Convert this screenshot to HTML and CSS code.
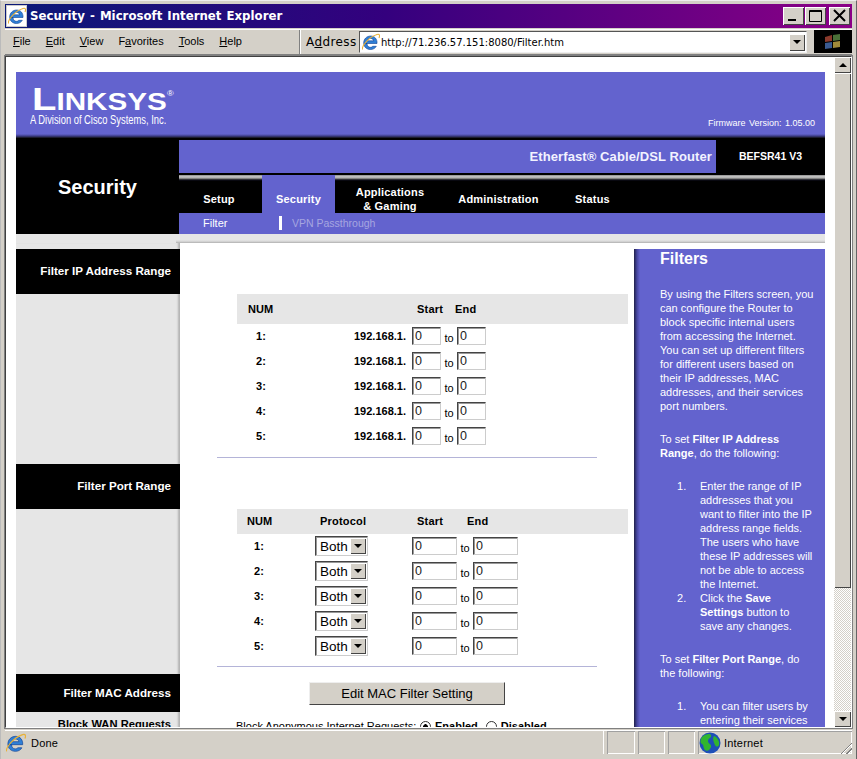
FILE: index.html
```html
<!DOCTYPE html>
<html lang="en">
<head>
<meta charset="utf-8">
<title>Security - Microsoft Internet Explorer</title>
<link rel="stylesheet" href="styles.css">
</head>
<body>
<svg class="defs" width="0" height="0" aria-hidden="true">
  <symbol id="ie" viewBox="1 1 18 18">
    <path d="M3 11.500h13c.4-4.500-2.500-7.500-6.300-7.500-4 0-7 3-7 7 0 4 3 6.500 6.800 6.500 2.700 0 4.700-1.200 5.800-3.200h-3.600c-.6.7-1.300 1-2.300 1-2 0-3.300-1.300-3.400-3.800zM6.500 8.800c.3-1.500 1.500-2.400 3.100-2.400 1.600 0 2.800.9 3 2.400z" fill="#2f7fd6" stroke="#0d3f94" stroke-width=".6"/>
    <path d="M1.500 17.500C.5 14 8 5 16 2.500c2.500-.8 3.200.8 2 3.500" fill="none" stroke="#e8b23a" stroke-width="1.100"/>
  </symbol>
</svg>
<div class="window">
  <header class="titlebar">
    <span class="doc-icon"><svg class="ie-small" width="18" height="18"><use href="#ie"/></svg></span>
    <span class="title-text">Security - Microsoft Internet Explorer</span>
    <span class="win-buttons">
      <span class="win-btn"><svg width="21" height="18" viewBox="0 0 21 18"><rect x="5" y="12" width="8" height="2" fill="#000"/></svg></span>
      <span class="win-btn"><svg width="21" height="18" viewBox="0 0 21 18"><path d="M4.500 3.500h12v11h-12zM4.500 4.500h12" fill="none" stroke="#000"/></svg></span>
      <span class="win-btn win-close"><svg width="21" height="18" viewBox="0 0 21 18"><path d="M5 3l11 11M16 3L5 14" stroke="#000" stroke-width="2" fill="none"/></svg></span>
    </span>
  </header>
  <div class="menubar">
    <nav class="menus">
      <span><u>F</u>ile</span><span><u>E</u>dit</span><span><u>V</u>iew</span><span>F<u>a</u>vorites</span><span><u>T</u>ools</span><span><u>H</u>elp</span>
    </nav>
    <div class="address">
      <span class="address-label">A<u>d</u>dress</span>
      <div class="address-box">
        <svg width="18" height="18"><use href="#ie"/></svg>
        <span class="url">http://71.236.57.151:8080/Filter.htm</span>
        <span class="combo-btn"><i class="arrow-down"></i></span>
      </div>
    </div>
    <div class="flag-box">
      <svg width="22" height="20" viewBox="0 0 22 20">
        <path d="M3 5l7-2v6l-7 1z" fill="#8a3a2c"/><path d="M11 3l7-1v6l-7 1z" fill="#4a7038"/><path d="M3 11l7-1v6l-7 1z" fill="#3a5a90"/><path d="M11 10l7-1v6l-7 1z" fill="#a08a3a"/>
      </svg>
    </div>
  </div>
  <div class="viewport">
    <div class="page-area">
      <div class="page">
        <div class="brand">
          <div class="logo">
            <div class="logo-word"><span class="logo-cap">L</span>INKSYS<sup class="logo-reg">®</sup></div>
            <div class="logo-sub">A Division of Cisco Systems, Inc.</div>
          </div>
          <div class="firmware">Firmware Version: 1.05.00</div>
        </div>
        <div class="top">
          <div class="top-title">Security</div>
          <div class="top-right">
            <div class="product">
              <div class="product-name">Etherfast® Cable/DSL Router</div>
              <div class="product-model">BEFSR41 V3</div>
            </div>
            <div class="tabs">
              <div class="tab tab-setup">Setup</div>
              <div class="tab tab-active">Security</div>
              <div class="tab tab-apps">Applications<br>&amp; Gaming</div>
              <div class="tab tab-admin">Administration</div>
              <div class="tab tab-status">Status</div>
            </div>
            <div class="subnav">
              <span class="sub-current">Filter</span>
              <span class="sub-bar"></span>
              <span class="sub-other">VPN Passthrough</span>
            </div>
          </div>
        </div>
        <div class="strip"></div>
        <div class="main">
          <aside class="side">
            <div class="side-head side-ip">Filter IP Address Range</div>
            <div class="side-head side-port">Filter Port Range</div>
            <div class="side-head side-mac">Filter MAC Address</div>
            <div class="side-plain">Block WAN Requests</div>
          </aside>
          <section class="content">
            <div class="thead thead-ip">
              <span class="h-num">NUM</span><span class="h-start">Start</span><span class="h-end">End</span>
            </div>
            <div class="ip-row"><span class="num">1:</span><span class="ip">192.168.1.</span><input class="field field-s" value="0"><span class="to">to</span><input class="field field-s" value="0"></div>
            <div class="ip-row"><span class="num">2:</span><span class="ip">192.168.1.</span><input class="field field-s" value="0"><span class="to">to</span><input class="field field-s" value="0"></div>
            <div class="ip-row"><span class="num">3:</span><span class="ip">192.168.1.</span><input class="field field-s" value="0"><span class="to">to</span><input class="field field-s" value="0"></div>
            <div class="ip-row"><span class="num">4:</span><span class="ip">192.168.1.</span><input class="field field-s" value="0"><span class="to">to</span><input class="field field-s" value="0"></div>
            <div class="ip-row"><span class="num">5:</span><span class="ip">192.168.1.</span><input class="field field-s" value="0"><span class="to">to</span><input class="field field-s" value="0"></div>
            <hr class="rule rule-ip">
            <div class="thead thead-port">
              <span class="h-num">NUM</span><span class="h-proto">Protocol</span><span class="h-pstart">Start</span><span class="h-pend">End</span>
            </div>
            <div class="port-row"><span class="num">1:</span><span class="select"><span class="select-val">Both</span><span class="select-btn"><i class="arrow-down"></i></span></span><input class="field field-l" value="0"><span class="to">to</span><input class="field field-l" value="0"></div>
            <div class="port-row"><span class="num">2:</span><span class="select"><span class="select-val">Both</span><span class="select-btn"><i class="arrow-down"></i></span></span><input class="field field-l" value="0"><span class="to">to</span><input class="field field-l" value="0"></div>
            <div class="port-row"><span class="num">3:</span><span class="select"><span class="select-val">Both</span><span class="select-btn"><i class="arrow-down"></i></span></span><input class="field field-l" value="0"><span class="to">to</span><input class="field field-l" value="0"></div>
            <div class="port-row"><span class="num">4:</span><span class="select"><span class="select-val">Both</span><span class="select-btn"><i class="arrow-down"></i></span></span><input class="field field-l" value="0"><span class="to">to</span><input class="field field-l" value="0"></div>
            <div class="port-row"><span class="num">5:</span><span class="select"><span class="select-val">Both</span><span class="select-btn"><i class="arrow-down"></i></span></span><input class="field field-l" value="0"><span class="to">to</span><input class="field field-l" value="0"></div>
            <hr class="rule rule-port">
            <div class="btn-row"><button class="edit-btn" type="button">Edit MAC Filter Setting</button></div>
            <div class="radio-row">
              <span class="radio-label">Block Anonymous Internet Requests:</span>
              <span class="radio radio-on"></span><b>Enabled</b>
              <span class="radio radio-off"></span><b>Disabled</b>
            </div>
          </section>
          <aside class="help">
            <h2 class="help-title">Filters</h2>
            <p>By using the Filters screen, you can configure the Router to block specific internal users from accessing the Internet. You can set up different filters for different users based on their IP addresses, MAC addresses, and their services port numbers.</p>
            <p>To set <b>Filter IP Address Range</b>, do the following:</p>
            <ol>
              <li><span>Enter the range of IP addresses that you want to filter into the IP address range fields. The users who have these IP addresses will not be able to access the Internet.</span></li>
              <li><span>Click the <b>Save Settings</b> button to save any changes.</span></li>
            </ol>
            <p>To set <b>Filter Port Range</b>, do the following:</p>
            <ol>
              <li><span>You can filter users by entering their services port numbers.</span></li>
            </ol>
          </aside>
        </div>
      </div>
    </div>
    <div class="scrollbar">
      <span class="sb-btn"><i class="arrow-up"></i></span>
      <span class="sb-thumb"></span>
      <span class="sb-track"></span>
      <span class="sb-btn"><i class="arrow-down"></i></span>
    </div>
  </div>
  <footer class="statusbar">
    <div class="st-main"><svg width="20" height="20"><use href="#ie"/></svg><span>Done</span></div>
    <div class="st-cell st-a"></div>
    <div class="st-cell st-b"></div>
    <div class="st-cell st-b"></div>
    <div class="st-zone">
      <svg width="22" height="22" viewBox="0 0 22 22">
        <circle cx="11" cy="11" r="10.500" fill="#1d4fb8"/>
        <path d="M3 5c3-3 8-4 9-2 1 3-3 3-3 6s4 3 3 6-4 5-6 3-1-5-3-6-2-4 0-7zM15 4c3 1 6 5 5 9-1 2-3 2-4 0s-3-7-1-9z" fill="#31b52e"/>
      </svg>
      <span>Internet</span>
      <span class="grip"></span>
    </div>
  </footer>
</div>
</body>
</html>
```
FILE: styles.css
```css
* { box-sizing: border-box; }
html, body { margin: 0; padding: 0; }
body { width: 857px; height: 759px; overflow: hidden; background: #d4d0c8; font-family: "Liberation Sans", Arial, sans-serif; font-size: 11px; color: #000; }
.defs { display: block; height: 0; }
.window { width: 857px; height: 759px; padding: 4px 4px 2px; display: flex; flex-direction: column; background: #d4d0c8; border-top: 1px solid #eee; border-left: 1px solid #bbb; border-right: 1px solid #666; }

/* title bar */
.titlebar { height: 24px; flex: none; display: flex; align-items: center; background: linear-gradient(90deg, #0a1a78 0%, #34007e 45%, #8b0086 100%); color: #fff; margin-top: -1px; }
.doc-icon { width: 21px; height: 22px; background: #fff; margin-left: 1px; display: flex; align-items: center; justify-content: center; border: 1px solid #ccc; }
.title-text { margin-left: 3px; font-family: "DejaVu Sans", sans-serif; font-size: 11.750px; font-weight: bold; white-space: nowrap; word-spacing: 1px; }
.win-buttons { margin-left: auto; display: flex; gap: 1px; padding-right: 2px; }
.win-btn { width: 21px; height: 18px; background: #d4d0c8; box-shadow: inset 1px 1px 0 #fff, inset -1px -1px 0 #444; display: block; }
.win-btn svg { display: block; }
.win-close { margin-left: 2px; }

/* menu row */
.menubar { height: 26px; flex: none; display: flex; margin-top: 1px; border-top: 1px solid #fff; border-bottom: 1px solid #808080; }
.menus { width: 295px; display: flex; align-items: center; padding: 0 0 2px 8px; gap: 15px; border-right: 1px solid #808080; box-shadow: 1px 0 0 #fff; font-size: 11px; }
.menus span { display: block; }
.address { flex: 1; display: flex; align-items: center; padding-left: 6px; }
.address-label { font-family: "DejaVu Sans", sans-serif; font-size: 12px; letter-spacing: .4px; width: 53px; }
.address-box { width: 448px; height: 22px; background: #fff; display: flex; align-items: center; border: 1px solid; border-color: #555 #eee #eee #555; padding: 0 1px 0 2px; }
.url { margin-left: 1px; font-family: "DejaVu Sans", sans-serif; font-size: 10px; }
.combo-btn { margin-left: auto; width: 16px; height: 17px; background: #d4d0c8; box-shadow: inset 1px 1px 0 #fff, inset -1px -1px 0 #444; display: flex; align-items: center; justify-content: center; }
.flag-box { margin-left: auto; width: 38px; height: 23px; background: #000; display: flex; align-items: center; justify-content: center; }
.arrow-down { display: block; width: 0; height: 0; border: 4px solid transparent; border-top-color: #000; border-bottom: 0; }
.arrow-up { display: block; width: 0; height: 0; border: 4px solid transparent; border-bottom-color: #000; border-top: 0; }

/* scrolling viewport */
.viewport { flex: 1; min-height: 0; display: flex; border: 1px solid; border-color: #404040 #fff #fff #404040; margin-top: 1px; background: #fff; outline: 1px solid #808080; }
.page-area { flex: 1; min-width: 0; overflow: hidden; padding: 15px 0 0 10px; background: #fff; }
.page { width: 809px; }
.scrollbar { width: 17px; flex: none; display: flex; flex-direction: column; background: #d4d0c8; }
.sb-btn { height: 16px; flex: none; background: #d4d0c8; box-shadow: inset 1px 1px 0 #fff, inset -1px -1px 0 #444; display: flex; align-items: center; justify-content: center; }
.sb-thumb { height: 515px; flex: none; background: #d4d0c8; box-shadow: inset 1px 1px 0 #fff, inset -1px -1px 0 #444; }
.sb-track { flex: 1; background: conic-gradient(#fff 25%, #d4d0c8 0 50%, #fff 0 75%, #d4d0c8 0) 0 0 / 2px 2px; }

/* linksys header */
.brand { height: 66px; display: flex; justify-content: space-between; background: linear-gradient(#6363ce 62px, #3d3d88 64px, #111 66px); color: #fff; }
.logo { padding: 14px 0 0 16px; }
.logo-word { height: 27px; font-weight: bold; font-size: 23px; line-height: 27px; transform: scaleX(1.290); transform-origin: 0 0; white-space: nowrap; }
.logo-cap { font-size: 31px; }
.logo-reg { font-size: 7px; font-weight: normal; vertical-align: 14px; line-height: 0; }
.logo-sub { margin-left: -2px; font-size: 12px; line-height: 14px; white-space: nowrap; transform: scaleX(.78); transform-origin: 0 0; }
.firmware { align-self: flex-start; margin: 45px 10px 0 0; font-size: 9px; line-height: 12px; word-spacing: 1px; }

.top { height: 96px; display: flex; background: #000; color: #fff; }
.top-title { width: 163px; flex: none; text-align: center; font-size: 20px; font-weight: bold; line-height: 24px; padding-top: 37px; }
.top-right { flex: 1; min-width: 0; padding-top: 2px; }
.product { height: 33px; display: flex; }
.product-name { width: 537px; background: #6363ce; text-align: right; padding-right: 4px; font-size: 13px; font-weight: bold; line-height: 33px; letter-spacing: .1px; color: #f2f2ff; }
.product-model { flex: 1; padding-left: 23px; font-size: 10.500px; font-weight: bold; line-height: 33px; }
.tabs { height: 38px; margin-top: 2px; display: flex; font-weight: bold; font-size: 11px; line-height: 14px; background: linear-gradient(#777 0, #c4c4c4 1px, #b0b0b0 3px, #555 4px, #101020 5px, #000 6px); }
.tab { display: flex; align-items: flex-end; justify-content: center; text-align: center; padding-bottom: 7px; letter-spacing: .2px; }
.tab-setup { width: 83px; padding-right: 3px; }
.tab-active { width: 73px; background: #6363ce; }
.tab-apps { width: 110px; padding-bottom: 0; }
.tab-admin { width: 107px; }
.tab-status { width: 81px; }
.subnav { height: 21px; background: #6363ce; display: flex; align-items: center; padding: 0 0 1px 24px; font-size: 11px; }
.sub-current { width: 76px; }
.sub-bar { width: 3px; height: 14px; background: #fff; margin-right: 10px; }
.sub-other { color: #a6a6e0; font-size: 10.500px; }
.strip { height: 9px; background: linear-gradient(#e6e6e6 6px, #cccccc 8px, #aaaaaa 9px) 160px 0 / 100% 100% no-repeat, #e6e6e6; }

/* three columns */
.main { display: flex; align-items: stretch; height: 700px; }
.side { width: 164px; flex: none; background: #e6e6e6; padding: 6px 0 0; box-shadow: inset -3px 0 2px -1px #b4b4b4; font-weight: bold; font-size: 11.650px; text-align: right; }
.side-head { background: #000; color: #fff; padding: 0 9px 2px 0; display: flex; align-items: center; justify-content: flex-end; }
.side-ip { height: 45px; }
.side-port { height: 45px; margin-top: 170px; }
.side-mac { height: 38px; margin-top: 165px; }
.side-plain { padding-right: 9px; margin-top: 5px; line-height: 14px; font-size: 11.200px; }

.content { width: 454px; flex: none; background: #fff; padding-top: 51px; }
.thead { margin-left: 57px; width: 391px; background: #e6e6e6; font-weight: bold; display: flex; align-items: center; }
.thead-ip { height: 30px; }
.thead-port { height: 25px; margin-top: 51px; padding-bottom: 1px; }
.h-num { margin-left: 11px; width: 169px; letter-spacing: .1px; }
.h-start { width: 38px; letter-spacing: .2px; }
.h-end { letter-spacing: .2px; }
.thead-port .h-num { width: 73px; margin-left: 10px; }
.h-proto { width: 97px; letter-spacing: .2px; }
.h-pstart { width: 50px; letter-spacing: .2px; }
.h-pend { letter-spacing: .2px; }
.ip-row, .port-row { height: 25px; display: flex; align-items: center; font-weight: bold; padding-bottom: 2px; }
.num { margin-left: 57px; width: 48px; text-align: center; }
.ip { width: 127px; padding-right: 6px; text-align: right; }
.to { font-weight: normal; width: 16px; text-align: center; padding-top: 4px; }
.field { height: 18px; padding: 0 0 0 2px; margin: 0; border: 1px solid; border-color: #444 #ccc #ccc #444; box-shadow: inset 1px 1px 0 #999; background: #fff; font-family: "Liberation Sans", sans-serif; font-size: 12.500px; color: #222; border-radius: 0; outline: 0; }
.field-s { width: 29px; }
.field-l { width: 45px; }
.port-row .num { width: 44px; }
.select { margin-left: 34px; margin-right: 44px; width: 53px; height: 20px; display: flex; align-items: center; border: 1px solid; border-color: #444 #ccc #ccc #444; box-shadow: inset 1px 1px 0 #999; font-weight: normal; font-size: 13.500px; padding: 1px; }
.select-val { flex: 1; padding: 1px 0 0 3px; }
.select-btn { width: 16px; height: 16px; background: #d4d0c8; box-shadow: inset 1px 1px 0 #fff, inset -1px -1px 0 #444; display: flex; align-items: center; justify-content: center; }
.rule { border: 0; height: 1px; background: #b4b4d8; margin: 0 0 0 37px; width: 380px; }
.rule-ip { margin-top: 8px; }
.rule-port { margin-top: 7px; }
.btn-row { padding: 15px 0 0 129px; }
.edit-btn { display: block; width: 196px; height: 23px; padding: 0; background: #d4d0c8; border: 1px solid; border-color: #eee #444 #444 #eee; font-family: "Liberation Sans", sans-serif; font-size: 13px; color: #000; }
.radio-row { margin: 14px 0 0 56px; display: flex; align-items: center; line-height: 14px; white-space: nowrap; }
.radio-label { width: 184px; }
.radio { width: 11px; height: 11px; border-radius: 50%; border: 1px solid #333; background: #fff; margin-right: 4px; }
.radio-on { background: radial-gradient(circle, #000 2px, #fff 2.500px); }
.radio-off { margin-left: 8px; }

/* help column */
.help { width: 191px; flex: none; margin-top: 6px; padding: 1px 10px 0 26px; background: linear-gradient(90deg, #20204a 0, #4646a0 3px, #6363ce 6px); color: #fff; line-height: 14px; font-size: 11px; }
.help-title { margin: 0 0 19px; font-size: 16px; line-height: 18px; font-weight: bold; }
.help p { margin: 0 0 19px; }
.help ol { margin: 0 2px 19px 0; padding: 0; list-style: none; counter-reset: step; }
.help li { counter-increment: step; display: flex; }
.help li::before { content: counter(step) "."; flex: 0 0 23px; margin-left: 17px; }

/* status bar */
.statusbar { height: 27px; flex: none; display: flex; gap: 3px; margin-top: 2px; padding: 0 0 3px; border-top: 1px solid #fff; font-size: 11px; letter-spacing: .2px; }
.st-main { width: 599px; display: flex; align-items: center; gap: 5px; padding-left: 1px; box-shadow: inset -1px 0 0 #fff; }
.st-cell { box-shadow: inset 1px 1px 0 #a0a0a0, inset -1px -1px 0 #fff; }
.st-a { width: 28px; }
.st-b { width: 27px; }
.st-zone { flex: 1; display: flex; align-items: center; gap: 3px; padding-left: 1px; box-shadow: inset 1px 1px 0 #a0a0a0, inset -1px -1px 0 #fff; }
.grip { margin-left: auto; align-self: flex-end; width: 13px; height: 13px; background: repeating-linear-gradient(135deg, transparent 0 2px, #808080 2px 3px, #fff 3px 4px); clip-path: polygon(100% 0, 100% 100%, 0 100%); }
```
